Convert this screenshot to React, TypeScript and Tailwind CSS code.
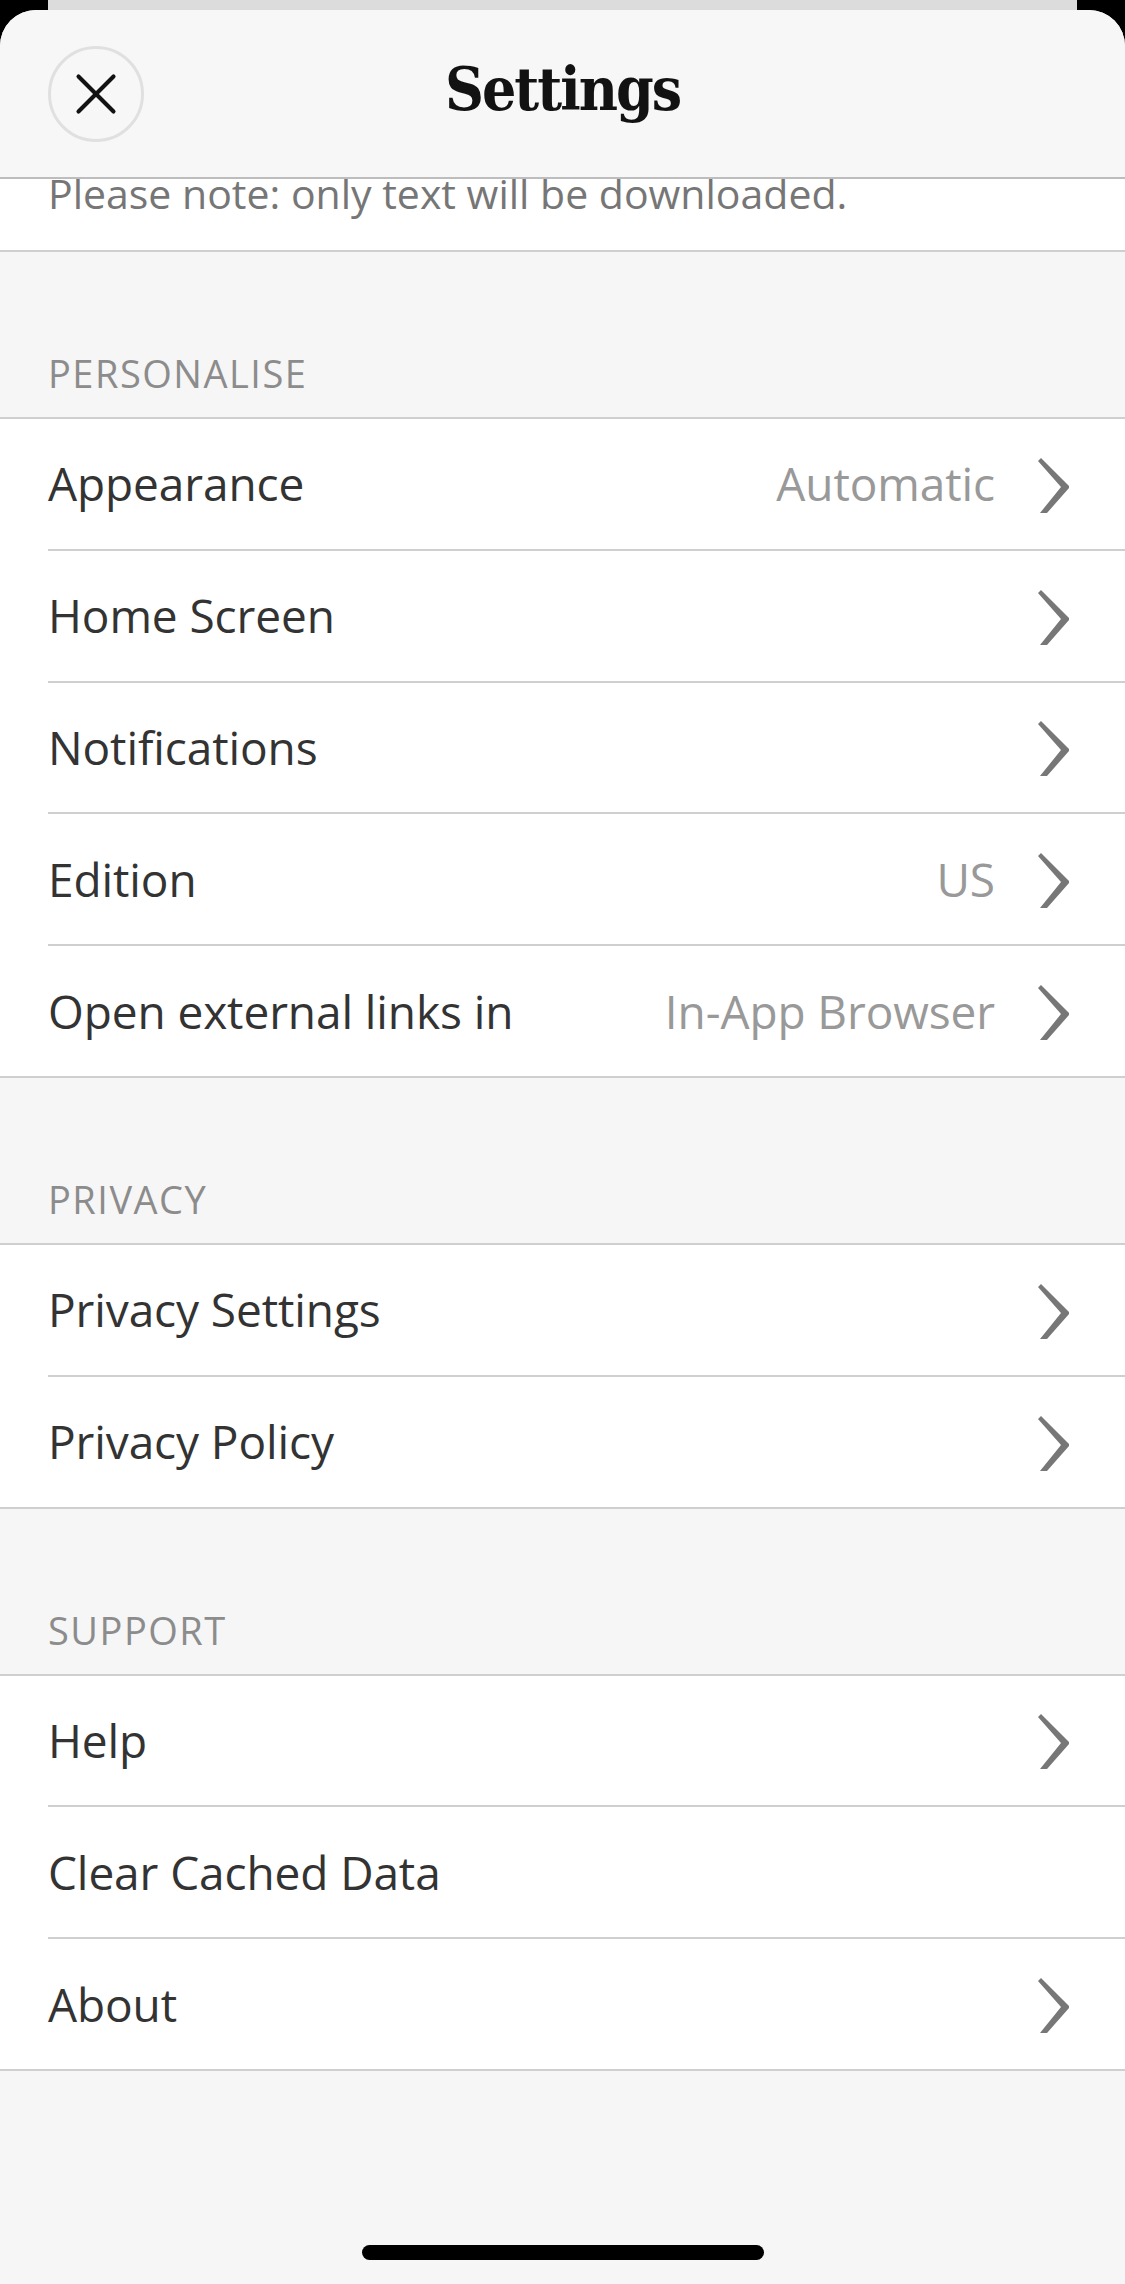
import { clsx } from "clsx";
import { X } from "lucide-react";

type Item = { label: string; value?: string; arrow?: boolean };

const sections: { title: string; items: Item[] }[] = [
  {
    title: "PERSONALISE",
    items: [
      { label: "Appearance", value: "Automatic", arrow: true },
      { label: "Home Screen", arrow: true },
      { label: "Notifications", arrow: true },
      { label: "Edition", value: "US", arrow: true },
      { label: "Open external links in", value: "In-App Browser", arrow: true },
    ],
  },
  {
    title: "PRIVACY",
    items: [
      { label: "Privacy Settings", arrow: true },
      { label: "Privacy Policy", arrow: true },
    ],
  },
  {
    title: "SUPPORT",
    items: [
      { label: "Help", arrow: true },
      { label: "Clear Cached Data" },
      { label: "About", arrow: true },
    ],
  },
];

function Chevron() {
  return (
    <svg width="31" height="55" viewBox="0 0 31 55" className="shrink-0 mt-[3px]">
      <polygon points="0,3 3,0 31,28 31,30 9,55 2,55 23,29" fill="#777777" />
    </svg>
  );
}

function Row({ item, last }: { item: Item; last: boolean }) {
  return (
    <div className={clsx("h-[131.8px]", last && "border-b-[2px] border-[#cfcfcf]")}>
      <div
        className={clsx(
          "h-full ml-[48px] pr-[56px] flex items-center justify-between",
          !last && "border-b-[2px] border-[#cfcfcf]"
        )}
      >
        <span className="text-[46px] text-[#333333] tracking-[-0.1px]">{item.label}</span>
        <div className="flex items-center gap-[43px]">
          {item.value && <span className="text-[46px] text-[#999999] tracking-[-0.1px]">{item.value}</span>}
          {item.arrow && <Chevron />}
        </div>
      </div>
    </div>
  );
}

export default function App() {
  return (
    <div className="w-[1125px] h-[2284px] bg-black overflow-hidden flex flex-col relative font-['Open_Sans','Noto_Sans',sans-serif]">
      {/* Sheet behind */}
      <div className="absolute top-0 left-[48px] right-[48px] h-[12px] bg-[#dcdcdc]" />

      <div className="relative mt-[10px] flex-1 min-h-0 bg-[#f6f6f6] rounded-t-[36px] overflow-hidden flex flex-col">
        {/* Header */}
        <div className="h-[169px] shrink-0 relative flex items-center justify-center border-b-[2px] border-[#bdbdbd] bg-[#f7f7f7]">
          <div className="absolute left-[48px] top-[36px] w-[96px] h-[96px] rounded-full border-[3px] border-[#e0e0e0] flex items-center justify-center">
            <X size={70} strokeWidth={1.4} color="#121212" />
          </div>
          <h1 className="font-['DejaVu_Serif_Condensed','DejaVu_Serif',serif] font-bold text-[60px] tracking-[-2px] text-[#121212] leading-none -mt-[10px]">
            Settings
          </h1>
        </div>

        {/* Clipped end of the previous section */}
        <div className="h-[73px] shrink-0 bg-white border-b-[2px] border-[#cfcfcf] overflow-hidden pl-[48px]">
          <p className="text-[41px] leading-[54px] text-[#767676] -mt-[13px]">Please note: only text will be downloaded.</p>
        </div>

        {sections.map((section) => (
          <div key={section.title} className="shrink-0">
            <div className="h-[165px] flex items-end pl-[48px] pb-[20px]">
              <span className="text-[38px] leading-[48px] tracking-[1.5px] text-[#8c8c8c]">{section.title}</span>
            </div>
            <div className="bg-white border-t-[2px] border-[#cfcfcf]">
              {section.items.map((item, i) => (
                <Row key={item.label} item={item} last={i === section.items.length - 1} />
              ))}
            </div>
          </div>
        ))}

        {/* Home indicator */}
        <div className="absolute left-[362px] bottom-[24px] w-[402px] h-[15px] rounded-full bg-black" />
      </div>
    </div>
  );
}
